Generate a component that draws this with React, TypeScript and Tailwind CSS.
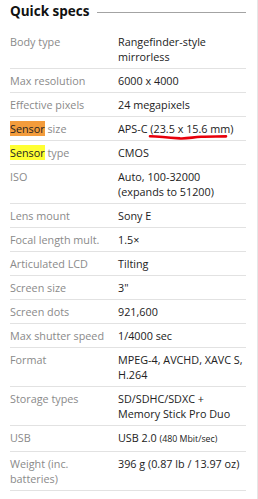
import React from "react";

type Row = { label: React.ReactNode; value: React.ReactNode };

const rows: Row[] = [
  { label: "Body type", value: <>Rangefinder-style<br />mirrorless</> },
  { label: "Max resolution", value: "6000 x 4000" },
  { label: "Effective pixels", value: "24 megapixels" },
  {
    label: (
      <>
        <span className="bg-[#f39c3c] text-[#222]">Sensor</span> size
      </>
    ),
    value: (
      <>
        APS-C{" "}
        <span className="relative">
          (23.5 x 15.6 mm)
          <svg
            className="absolute left-[-1px] top-[13px] overflow-visible"
            width="78"
            height="6"
            viewBox="0 0 78 6"
          >
            <path
              d="M1 2.2 C 10 2.6, 22 3.6, 31 4.4 C 38 4.8, 44 3.2, 52 2.8 C 62 2.5, 70 2.6, 77 2.4"
              stroke="#e8000b"
              strokeWidth="2.6"
              fill="none"
              strokeLinecap="round"
            />
          </svg>
        </span>
      </>
    ),
  },
  {
    label: (
      <>
        <span className="bg-[#ffff33] text-[#222]">Sensor</span> type
      </>
    ),
    value: "CMOS",
  },
  { label: "ISO", value: <>Auto, 100-32000<br />(expands to 51200)</> },
  { label: "Lens mount", value: "Sony E" },
  { label: "Focal length mult.", value: "1.5×" },
  { label: "Articulated LCD", value: "Tilting" },
  { label: "Screen size", value: "3\"" },
  { label: "Screen dots", value: "921,600" },
  { label: "Max shutter speed", value: "1/4000 sec" },
  { label: "Format", value: <>MPEG-4, AVCHD, XAVC S,<br />H.264</> },
  { label: "Storage types", value: <>SD/SDHC/SDXC +<br />Memory Stick Pro Duo</> },
  {
    label: "USB",
    value: (
      <>
        USB 2.0 <span className="text-[8.8px]">(480 Mbit/sec)</span>
      </>
    ),
  },
  { label: <>Weight (inc.<br />batteries)</>, value: "396 g (0.87 lb / 13.97 oz)" },
  { label: "Dimensions", value: "120 x 67 x 59 mm (4.72 x" },
];

export default function App() {
  return (
    <div
      className="w-[258px] h-[499px] overflow-hidden bg-white border-r border-[#e6e6e6] pl-[10px] pr-[11px]"
      style={{ fontFamily: '"Open Sans", "Noto Sans", sans-serif' }}
    >
      <div className="flex items-center h-[23px] mb-[7px]">
        <h2 className="text-[13.5px] font-bold text-[#111] leading-none whitespace-nowrap">
          Quick specs
        </h2>
        <div className="flex-1 h-px bg-[#a3a3a3] ml-[8px] mt-[1px]" />
      </div>
      <div className="flex flex-col">
        {rows.map((r, i) => (
          <div
            key={i}
            className="grid grid-cols-[108px_1fr] border-b border-[#e2e2e2] py-[4px] text-[10.8px] leading-[15px]"
          >
            <div className="text-[#8a8a8a]">{r.label}</div>
            <div className="text-[#222] whitespace-nowrap">{r.value}</div>
          </div>
        ))}
      </div>
    </div>
  );
}
